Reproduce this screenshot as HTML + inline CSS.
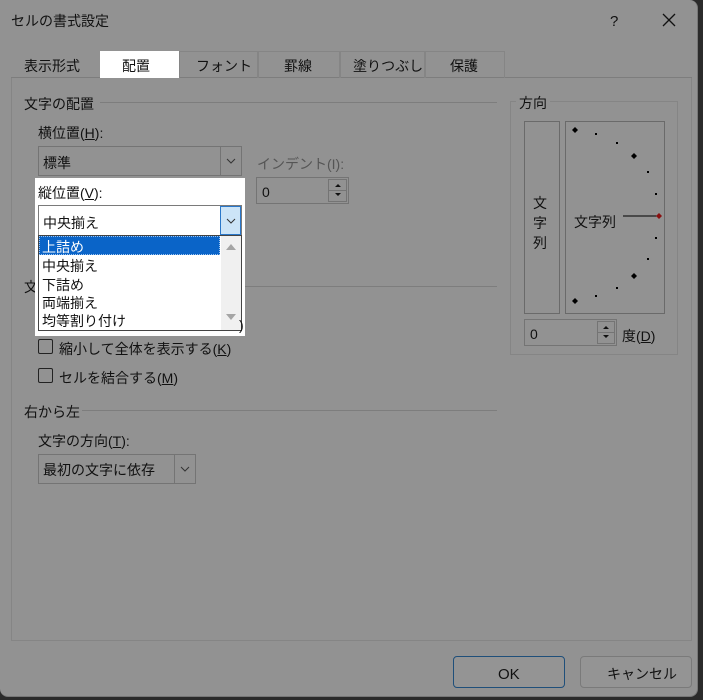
<!DOCTYPE html>
<html><head><meta charset="utf-8">
<style>
*{box-sizing:border-box;margin:0;padding:0}
html,body{width:703px;height:700px;overflow:hidden;background:#2b2b2b}
body{font-family:"Liberation Sans","Noto Sans CJK JP",sans-serif;font-size:14px;color:#111;position:relative}
.a{position:absolute;white-space:nowrap;line-height:1}
div.a{margin-top:2px}
svg.a{margin-top:0}
.bg{margin-top:0 !important}
#dlg{position:absolute;left:0;top:0;width:698px;height:697px;background:#929292;border-radius:0 8px 8px 8px;border-right:1px solid #777;border-bottom:1px solid #777}
.line{position:absolute;height:1px;background:#7d7d7d}
.box{position:absolute;border:1px solid #747474}
.btn{position:absolute;border:1px solid #7a7a7a;background:#949494}
u{text-decoration:underline}
</style></head><body>
<div id="dlg">
<div class="a" style="left:11px;top:12px;font-size:14px">セルの書式設定</div>
<div class="a" style="left:610px;top:12px;font-size:15px">?</div>
<svg class="a" style="left:662px;top:13px" width="14" height="14"><path d="M1 1L13 13M13 1L1 13" stroke="#111" stroke-width="1.3"/></svg>

<!-- tabs -->
<div class="line" style="left:11px;top:77px;width:681px"></div>
<div class="box" style="left:179px;top:51px;width:79px;height:27px;border-color:#858585;border-bottom:none"></div>
<div class="box" style="left:258px;top:51px;width:82px;height:27px;border-color:#858585;border-bottom:none"></div>
<div class="box" style="left:340px;top:51px;width:85px;height:27px;border-color:#858585;border-bottom:none"></div>
<div class="box" style="left:425px;top:51px;width:80px;height:27px;border-color:#858585;border-bottom:none"></div>
<div class="a" style="left:24px;top:57px">表示形式</div>
<div class="a bg" style="left:100px;top:51px;width:79px;height:27px;background:#fff"></div>
<div class="a" style="left:122px;top:57px">配置</div>
<div class="a" style="left:196px;top:57px">フォント</div>
<div class="a" style="left:284px;top:57px">罫線</div>
<div class="a" style="left:353px;top:57px">塗りつぶし</div>
<div class="a" style="left:450px;top:57px">保護</div>

<!-- panel -->
<div class="box" style="left:11px;top:78px;width:681px;height:563px;border-color:#858585;border-top:none"></div>

<div class="a" style="left:24px;top:95px">文字の配置</div>
<div class="line" style="left:100px;top:102px;width:397px"></div>
<div class="a" style="left:38px;top:124px">横位置(<u>H</u>):</div>
<div class="box" style="left:38px;top:146px;width:204px;height:30px"></div>
<div class="a" style="left:43px;top:154px">標準</div>
<div class="box" style="left:220px;top:146px;width:22px;height:30px"></div>
<svg class="a" style="left:225px;top:157px" width="12" height="8"><path d="M2 2L6 6L10 2" stroke="#333" fill="none"/></svg>
<div class="a" style="left:257px;top:155px;color:#555">インデント(I):</div>
<div class="box" style="left:256px;top:177px;width:93px;height:27px"></div>
<div class="a" style="left:262px;top:183px">0</div>
<div class="box" style="left:328px;top:179px;width:19px;height:12px"></div>
<div class="box" style="left:328px;top:190px;width:19px;height:12px"></div>
<svg class="a" style="left:333px;top:181px" width="10" height="20"><path d="M2 6L5 3L8 6Z M2 12L5 15L8 12Z" fill="#111"/></svg>

<div class="a" style="left:24px;top:278px">文</div>
<div class="line" style="left:245px;top:286px;width:252px"></div>

<div class="box" style="left:38px;top:339px;width:15px;height:15px;border-radius:2px;border-color:#222"></div>
<div class="a" style="left:59px;top:340px">縮小して全体を表示する(<u>K</u>)</div>
<div class="box" style="left:38px;top:368px;width:15px;height:15px;border-radius:2px;border-color:#222"></div>
<div class="a" style="left:59px;top:369px">セルを結合する(<u>M</u>)</div>

<div class="a" style="left:24px;top:403px">右から左</div>
<div class="line" style="left:82px;top:410px;width:415px"></div>
<div class="a" style="left:38px;top:432px">文字の方向(<u>T</u>):</div>
<div class="box" style="left:38px;top:454px;width:158px;height:30px"></div>
<div class="a" style="left:43px;top:461px">最初の文字に依存</div>
<div class="box" style="left:174px;top:454px;width:22px;height:30px"></div>
<svg class="a" style="left:179px;top:465px" width="12" height="8"><path d="M2 2L6 6L10 2" stroke="#333" fill="none"/></svg>

<!-- orientation -->
<div class="box" style="left:510px;top:101px;width:168px;height:254px;border-color:#858585"></div>
<div class="a" style="left:516px;top:94px;background:#929292;padding:0 3px">方向</div>
<div class="box" style="left:524px;top:121px;width:36px;height:193px;border-color:#6a6a6a"></div>
<div class="a" style="left:533px;top:191px;line-height:20px;white-space:normal;width:16px">文<br>字<br>列</div>
<div class="box" style="left:565px;top:121px;width:100px;height:193px;border-color:#6a6a6a"></div>
<svg class="a" style="left:565px;top:121px" width="100" height="193">
<g fill="#000">
<path d="M10 6l3 3-3 3-3-3z"/><path d="M69 32l3 3-3 3-3-3z"/><path d="M69 152l3 3-3 3-3-3z"/><path d="M10 177l3 3-3 3-3-3z"/>
<rect x="30" y="12" width="2" height="2"/><rect x="51" y="21" width="2" height="2"/><rect x="82" y="50" width="2" height="2"/><rect x="90" y="72" width="2" height="2"/>
<rect x="90" y="116" width="2" height="2"/><rect x="82" y="137" width="2" height="2"/><rect x="51" y="166" width="2" height="2"/><rect x="30" y="174" width="2" height="2"/>
</g>
<path d="M58 95H93" stroke="#000" stroke-width="1"/>
<path d="M94 92l3 3-3 3-3-3z" fill="#8a1010"/>
</svg>
<div class="a" style="left:574px;top:213px">文字列</div>
<div class="box" style="left:524px;top:319px;width:93px;height:27px"></div>
<div class="a" style="left:530px;top:325px">0</div>
<div class="box" style="left:597px;top:321px;width:18px;height:12px"></div>
<div class="box" style="left:597px;top:332px;width:18px;height:12px"></div>
<svg class="a" style="left:601px;top:323px" width="10" height="20"><path d="M2 6L5 3L8 6Z M2 12L5 15L8 12Z" fill="#111"/></svg>
<div class="a" style="left:622px;top:327px">度(<u>D</u>)</div>

<!-- buttons -->
<div class="btn" style="left:453px;top:656px;width:112px;height:32px;border-radius:4px;border-color:#1f4f7a"></div>
<div class="a" style="left:498px;top:665px;font-size:15px">OK</div>
<div class="btn" style="left:580px;top:656px;width:112px;height:32px;border-radius:4px"></div>
<div class="a" style="left:607px;top:665px">キャンセル</div>

<!-- popup -->
<div class="a bg" style="left:35px;top:178px;width:210px;height:158px;background:#fff"></div>
<div class="a" style="left:38px;top:184px">縦位置(<u>V</u>):</div>
<div class="box" style="left:38px;top:205px;width:204px;height:31px;border-color:#7a7a7a"></div>
<div class="a" style="left:43px;top:214px">中央揃え</div>
<div class="box" style="left:220px;top:206px;width:21px;height:29px;background:#cce4f7;border-color:#2a77c9"></div>
<svg class="a" style="left:225px;top:217px" width="12" height="8"><path d="M2 2L6 6L10 2" stroke="#333" fill="none"/></svg>
<div class="box" style="left:38px;top:235px;width:204px;height:96px;border-color:#444"></div>
<div class="a bg" style="left:221px;top:236px;width:20px;height:94px;background:#f0f0f0"></div>
<svg class="a" style="left:223px;top:240px" width="16" height="84"><path d="M3 10L8 4L13 10Z M3 74L8 80L13 74Z" fill="#a5a5a5"/></svg>
<div class="a bg" style="left:39px;top:236px;width:181px;height:19px;background:#0a64c8;outline:1px dotted #9cc4f0;outline-offset:-1px"></div>
<div class="a" style="left:42px;top:238px;color:#fff">上詰め</div>
<div class="a" style="left:42px;top:257px">中央揃え</div>
<div class="a" style="left:42px;top:276px">下詰め</div>
<div class="a" style="left:42px;top:294px">両端揃え</div>
<div class="a" style="left:42px;top:312px">均等割り付け</div>
</div>
<div class="a" style="left:239px;top:316px;color:#111">)</div>
</body></html>
